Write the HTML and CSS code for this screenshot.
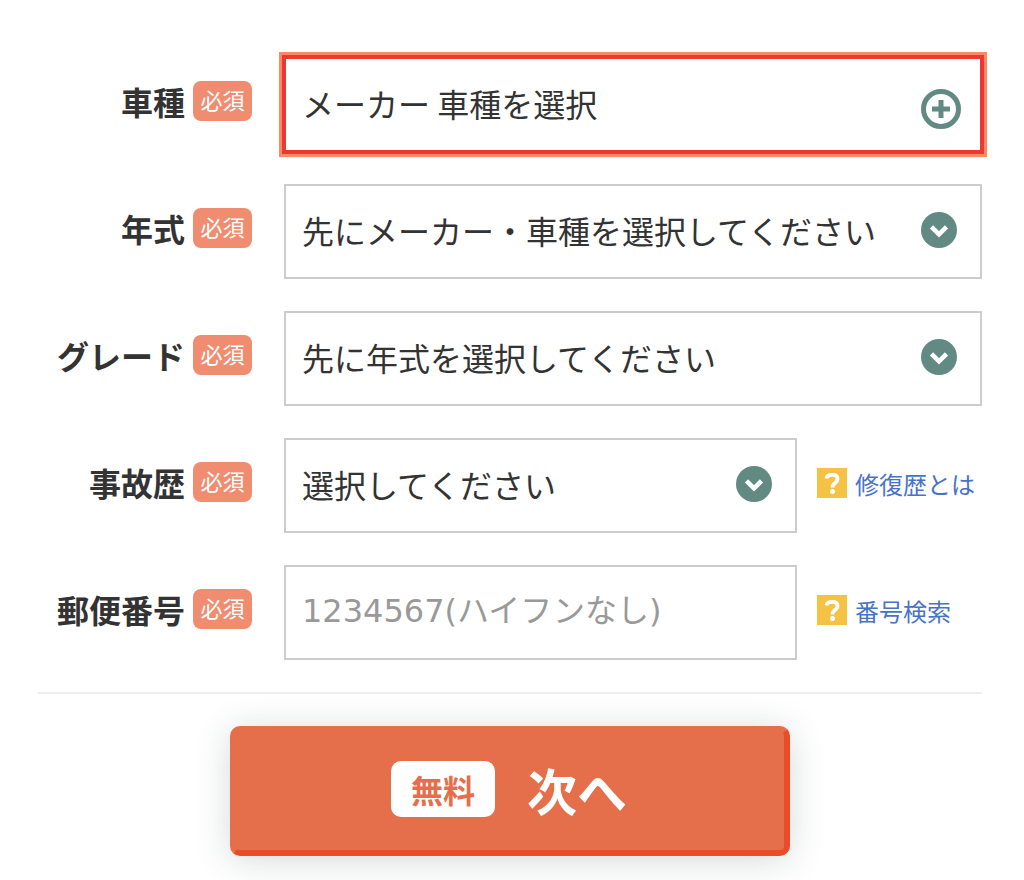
FILE: index.html
```html
<!DOCTYPE html>
<html lang="ja">
<head>
<meta charset="utf-8">
<meta name="viewport" content="width=device-width, initial-scale=1">
<title>車種</title>
<link rel="stylesheet" href="styles.css">
</head>
<body>
<svg class="defs" aria-hidden="true">
  <symbol id="plus" viewBox="0 0 40 40">
    <circle cx="20" cy="20" r="17.5" fill="none" stroke="#628a83" stroke-width="5"/>
    <path d="M20 11v18M11 20h18" fill="none" stroke="#628a83" stroke-width="5"/>
  </symbol>
  <symbol id="chevron" viewBox="0 0 36 36">
    <circle cx="18" cy="18" r="18" fill="#628a83"/>
    <path d="M10.500 14.800L18 22.300L25.500 14.800" fill="none" stroke="#fff" stroke-width="4.600"/>
  </symbol>
  <symbol id="question" viewBox="0 0 30 30">
    <rect width="30" height="30" fill="#f6c244"/>
    <path d="M9.500 10.500Q10 6.800 15.200 6.800Q20.500 6.800 20.500 10.800Q20.500 13.200 18 15Q15.500 16.800 15.500 19.500" fill="none" stroke="#fff" stroke-width="3.800"/>
    <circle cx="15.500" cy="23.500" r="2.500" fill="#fff"/>
  </symbol>
</svg>
<form class="form">
  <div class="row">
    <div class="head"><label class="name" for="model">車種</label><span class="required">必須</span></div>
    <div class="field">
      <div class="control">
        <button class="box box-active" id="model" type="button">メーカー 車種を選択</button>
        <svg class="icon icon-plus" aria-hidden="true"><use href="#plus"/></svg>
      </div>
    </div>
  </div>
  <div class="row">
    <div class="head"><label class="name" for="year">年式</label><span class="required">必須</span></div>
    <div class="field">
      <div class="control">
        <select class="box" id="year"><option>先にメーカー・車種を選択してください</option></select>
        <svg class="icon icon-chevron" aria-hidden="true"><use href="#chevron"/></svg>
      </div>
    </div>
  </div>
  <div class="row">
    <div class="head"><label class="name" for="grade">グレード</label><span class="required">必須</span></div>
    <div class="field">
      <div class="control">
        <select class="box" id="grade"><option>先に年式を選択してください</option></select>
        <svg class="icon icon-chevron" aria-hidden="true"><use href="#chevron"/></svg>
      </div>
    </div>
  </div>
  <div class="row">
    <div class="head"><label class="name" for="accident">事故歴</label><span class="required">必須</span></div>
    <div class="field">
      <div class="control">
        <select class="box" id="accident"><option>選択してください</option></select>
        <svg class="icon icon-chevron" aria-hidden="true"><use href="#chevron"/></svg>
      </div>
      <a class="help" href="#repair"><svg class="help-icon" aria-hidden="true"><use href="#question"/></svg><span class="help-text">修復歴とは</span></a>
    </div>
  </div>
  <div class="row">
    <div class="head"><label class="name" for="zip">郵便番号</label><span class="required">必須</span></div>
    <div class="field">
      <div class="control">
        <input class="box box-input" id="zip" type="text" inputmode="numeric" placeholder="1234567(ハイフンなし)">
      </div>
      <a class="help" href="#search"><svg class="help-icon" aria-hidden="true"><use href="#question"/></svg><span class="help-text">番号検索</span></a>
    </div>
  </div>
  <div class="actions">
    <button class="next" type="submit"><span class="free">無料</span><span>次へ</span></button>
  </div>
</form>
</body>
</html>
```
FILE: styles.css
```css
* {
  box-sizing: border-box;
}

body {
  margin: 0;
  background: #fff;
  color: #333;
  font-family: "Noto Sans CJK JP", sans-serif;
}

.defs {
  display: none;
}

.form {
  display: flex;
  flex-direction: column;
  gap: 32px;
  padding: 57px 42px 24px 38px;
}

.row {
  display: grid;
  grid-template-columns: 214px 1fr;
  gap: 32px;
}

.head {
  display: flex;
  justify-content: flex-end;
  align-items: center;
  gap: 8px;
  padding-bottom: 8px;
}

.name {
  font-size: 32px;
  line-height: 40px;
  font-weight: 700;
  white-space: nowrap;
}

.required {
  flex: none;
  width: 59px;
  padding-bottom: 4px;
  border-radius: 8px;
  background: #f08d70;
  color: #fff;
  font-size: 22px;
  line-height: 36px;
  text-align: center;
}

.field {
  display: flex;
  align-items: center;
  gap: 20px;
  min-width: 0;
}

.control {
  position: relative;
  flex: 1;
  min-width: 0;
}

.box {
  display: block;
  appearance: none;
  width: 100%;
  height: 95px;
  margin: 0;
  padding: 0 64px 4px 16px;
  border: 2px solid #ccc;
  border-radius: 0;
  background: #fff;
  color: #333;
  font-family: "Noto Sans CJK JP", sans-serif;
  font-size: 32px;
  text-align: left;
}

.box-active {
  border-color: #ee3732;
  box-shadow: 0 0 0 2px #ee3732, 0 0 0 5px #f98a63;
}

.box-input {
  padding-right: 16px;
  font-family: "DejaVu Sans", "Noto Sans CJK JP", sans-serif;
}

.box-input::placeholder {
  color: #999;
  opacity: 1;
}

.icon {
  position: absolute;
  pointer-events: none;
}

.icon-plus {
  top: 32px;
  right: 21px;
  width: 40px;
  height: 40px;
}

.icon-chevron {
  top: 28px;
  right: 25px;
  width: 36px;
  height: 36px;
}

.help {
  display: flex;
  align-items: center;
  gap: 8px;
  width: 165px;
  padding-bottom: 4px;
  color: #4673ca;
  font-size: 24px;
  line-height: 32px;
  text-decoration: none;
  white-space: nowrap;
}

.help-icon {
  flex: none;
  width: 30px;
  height: 30px;
  margin-bottom: 2px;
}

.actions {
  display: flex;
  justify-content: center;
  padding-top: 32px;
  border-top: 2px solid #eee;
}

.next {
  display: flex;
  justify-content: center;
  align-items: center;
  gap: 32px;
  width: 560px;
  height: 130px;
  padding: 0 2px 4px 0;
  border: 6px solid #e66f4b;
  border-right-color: #e84c28;
  border-bottom-color: #e84c28;
  border-radius: 10px;
  background: #e66f4b;
  box-shadow: 0 4px 36px rgba(50, 70, 65, 0.2);
  color: #fff;
  font-family: "Noto Sans CJK JP", sans-serif;
  font-size: 50px;
  line-height: 64px;
  font-weight: 700;
}

.free {
  padding: 0 20px;
  border-radius: 10px;
  background: #fff;
  color: #e66f4b;
  font-size: 32px;
  line-height: 56px;
}
```
